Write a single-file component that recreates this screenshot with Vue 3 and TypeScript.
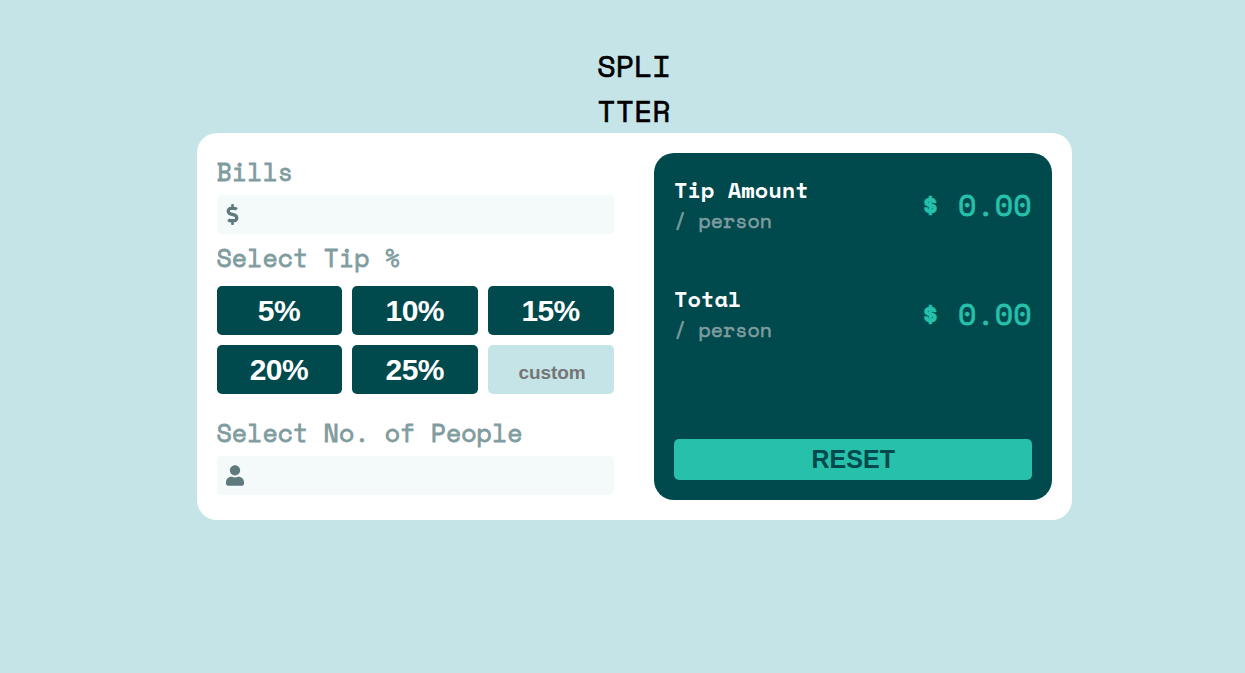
<script setup lang="ts">
import { ref } from 'vue'

interface Result {
  title: string
  amount: number
}

const bill = ref('')
const people = ref('')
const custom = ref('')
const tips: number[] = [5, 10, 15, 20, 25]
const results = ref<Result[]>([
  { title: 'Tip Amount', amount: 0 },
  { title: 'Total', amount: 0 },
])

function reset(): void {
  bill.value = ''
  people.value = ''
  custom.value = ''
  results.value.forEach((r) => (r.amount = 0))
}
</script>

<template>
  <main class="page">
    <h1 class="title"><span>SPLI</span><span>TTER</span></h1>
    <section class="card">
      <div class="form">
        <label class="label" for="bill">Bills</label>
        <div class="field">
          <svg class="dollar" viewBox="0 0 288 512" aria-hidden="true">
            <path d="M209.2 233.4l-108-31.6C88.7 198.2 80 186.5 80 173.5c0-16.3 13.2-29.5 29.5-29.5h66.3c12.2 0 24.2 3.7 34.2 10.5 6.1 4.1 14.3 3.1 19.5-2l34.8-34c7.1-6.9 6.1-18.4-1.8-24.5C238 74.8 207.4 64.1 176 64V16c0-8.8-7.2-16-16-16h-32c-8.8 0-16 7.2-16 16v48h-2.5C45.8 64-5.4 118.7.5 183.6c4.2 46.1 39.4 83.6 83.8 96.6l102.5 30c12.5 3.7 21.2 15.3 21.2 28.3 0 16.3-13.2 29.5-29.5 29.5h-66.3C100 368 88 364.3 78 357.5c-6.1-4.1-14.3-3.1-19.5 2l-34.8 34c-7.1 6.9-6.1 18.4 1.8 24.5 24.5 19.2 55.1 29.9 86.5 30v48c0 8.8 7.2 16 16 16h32c8.8 0 16-7.2 16-16v-48.2c46.6-.9 90.3-28.6 105.7-72.7 21.5-61.6-14.6-124.8-72.5-141.7z" />
          </svg>
          <input id="bill" v-model="bill" type="text" />
        </div>
        <span class="label tip-label">Select Tip %</span>
        <div class="tips">
          <button v-for="tip in tips" :key="tip" class="tip" type="button">{{ tip }}%</button>
          <input v-model="custom" class="custom" type="text" placeholder="custom" />
        </div>
        <label class="label people-label" for="people">Select No. of People</label>
        <div class="field">
          <svg class="user" viewBox="0 0 448 512" aria-hidden="true">
            <path d="M224 256c70.7 0 128-57.3 128-128S294.7 0 224 0 96 57.3 96 128s57.3 128 128 128zm89.6 32h-16.7c-22.2 10.2-46.9 16-72.9 16s-50.6-5.8-72.9-16h-16.7C60.2 288 0 348.2 0 422.4V464c0 26.5 21.5 48 48 48h352c26.5 0 48-21.5 48-48v-41.6c0-74.2-60.2-134.4-134.4-134.4z" />
          </svg>
          <input id="people" v-model="people" type="text" />
        </div>
      </div>
      <div class="summary">
        <div v-for="r in results" :key="r.title" class="result">
          <div class="caption">
            <span class="name">{{ r.title }}</span>
            <span class="per">/ person</span>
          </div>
          <div class="value"><b>$</b> {{ r.amount.toFixed(2) }}</div>
        </div>
        <button class="reset" type="button" @click="reset">RESET</button>
      </div>
    </section>
  </main>
</template>

<style>
body {
  margin: 0;
  background: #c5e4e7;
}
</style>

<style scoped>
* {
  box-sizing: border-box;
}
.page {
  width: 875px;
  min-height: 673px;
  margin-left: 196.5px;
  padding-top: 43px;
  font-family: 'Space Mono', 'DejaVu Sans Mono', monospace;
}
.title {
  display: flex;
  flex-direction: column;
  align-items: center;
  height: 90px;
  margin: 0;
  font-size: 30px;
  font-weight: 400;
  line-height: 45px;
  color: #000;
  -webkit-text-stroke: 0.7px #000;
}
.card {
  display: grid;
  grid-template-columns: repeat(2, minmax(0, 1fr));
  gap: 40px;
  height: 387px;
  padding: 20px;
  border-radius: 20px;
  background: #fff;
}
.form {
  display: flex;
  flex-direction: column;
}
.label {
  height: 42px;
  font-size: 25px;
  line-height: 38px;
  white-space: nowrap;
  color: #7f9c9f;
  -webkit-text-stroke: 0.8px #7f9c9f;
}
.tip-label {
  height: 52px;
  line-height: 48px;
}
.people-label {
  height: 42px;
  margin-top: 20px;
}
.field {
  display: flex;
  align-items: center;
  height: 39px;
  padding: 0 9px 1px;
  border-radius: 5px;
  background: #f4fafa;
}
.field svg {
  flex: none;
  height: 20px;
  fill: #5e7a7d;
}
.field .dollar {
  width: 13px;
  height: 21px;
}
.field .user {
  width: 18px;
  height: 21px;
  margin-top: 1px;
}
.field input {
  flex: 1;
  min-width: 0;
  padding: 0 8px;
  border: 0;
  outline: 0;
  background: transparent;
  font: 24px 'Space Mono', 'DejaVu Sans Mono', monospace;
  color: #00494d;
}
.tips {
  display: grid;
  grid-template-columns: repeat(3, minmax(0, 1fr));
  grid-auto-rows: 49px;
  gap: 10px;
}
.tip,
.custom,
.reset {
  width: 100%;
  margin: 0;
  padding: 0;
  border: 0;
  border-radius: 5px;
  font-family: Arial, 'Liberation Sans', sans-serif;
  font-weight: 700;
  text-align: center;
}
.tip {
  padding-right: 1px;
  background: #00494d;
  font-size: 30px;
  letter-spacing: -0.6px;
  color: #fff;
}
.custom {
  padding: 6px 0 0 2px;
  background: #c5e4e7;
  font-size: 19px;
  letter-spacing: -0.1px;
  color: #00494d;
}
.custom::placeholder {
  color: #757575;
}
.summary {
  display: flex;
  flex-direction: column;
  padding: 20px;
  border-radius: 20px;
  background: #00494d;
}
.result {
  display: flex;
  justify-content: space-between;
  height: 109px;
}
.caption {
  display: flex;
  flex-direction: column;
}
.name {
  font-size: 22px;
  font-weight: 700;
  line-height: 34px;
  color: #fff;
}
.per {
  font-size: 20px;
  line-height: 28px;
  color: #7f9c9f;
  -webkit-text-stroke: 0.6px #7f9c9f;
}
.value {
  height: 64px;
  font-size: 30px;
  line-height: 64px;
  white-space: nowrap;
  color: #26c0ab;
  -webkit-text-stroke: 0.8px #26c0ab;
}
.value b {
  -webkit-text-stroke: 0.4px #26c0ab;
}
.reset {
  height: 41px;
  margin-top: auto;
  padding-left: 1px;
  background: #26c0ab;
  font-size: 25px;
  color: #00494d;
}
</style>
